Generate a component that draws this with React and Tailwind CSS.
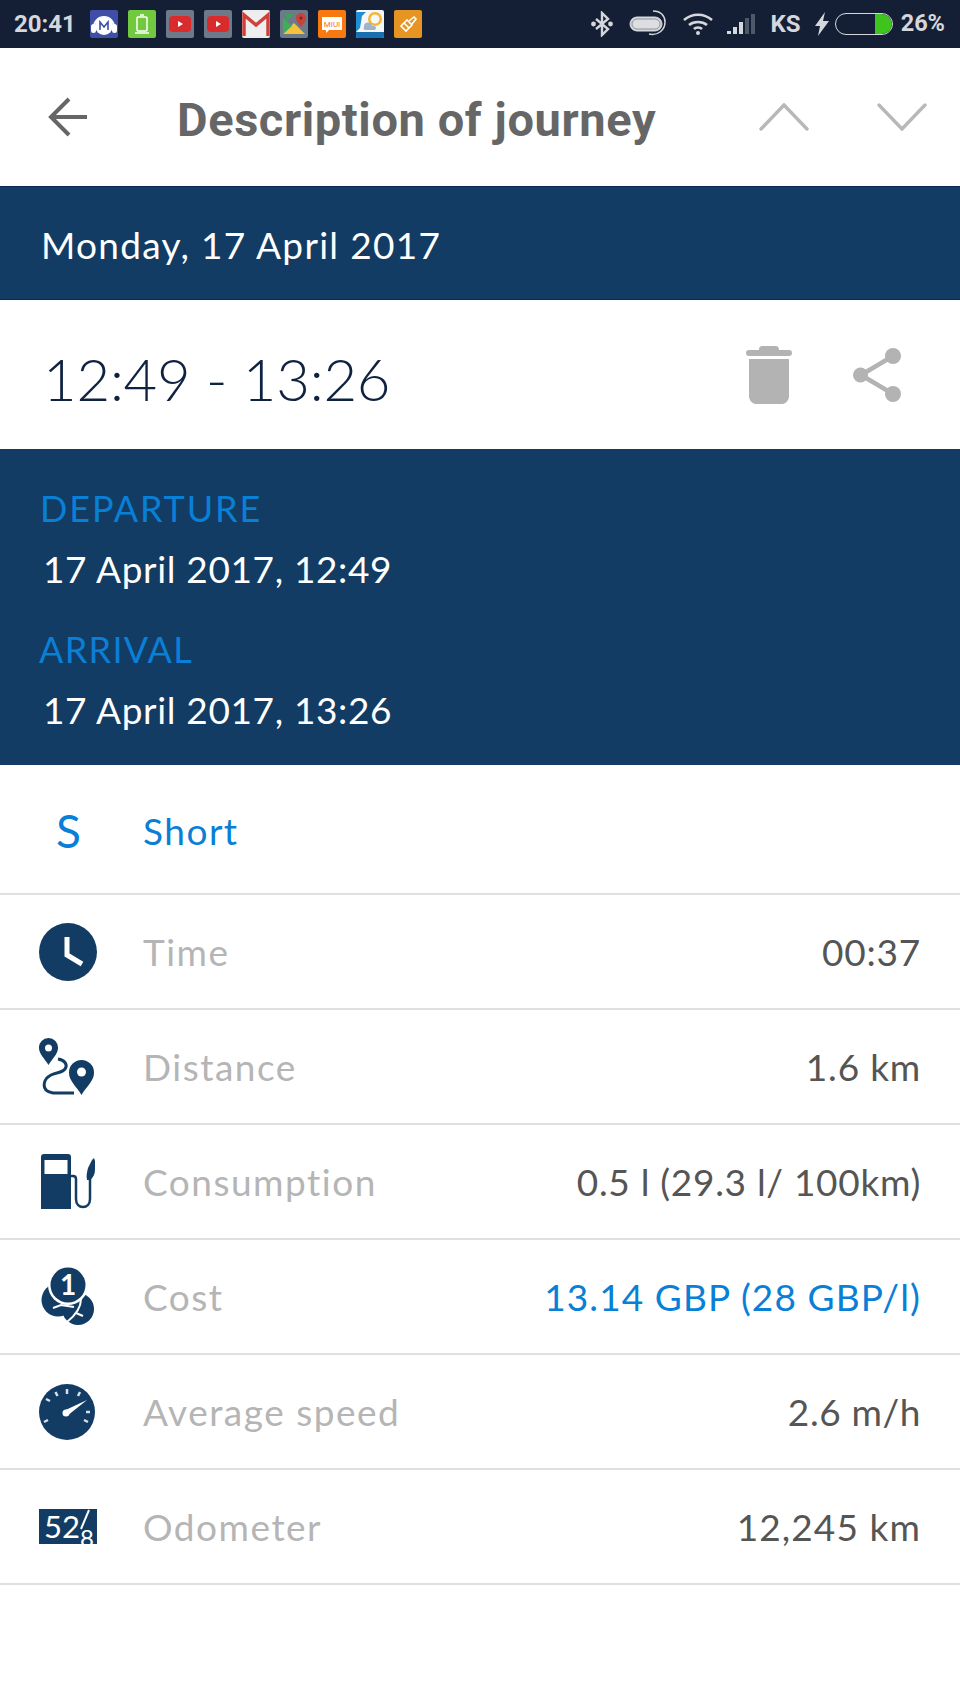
import React from "react";

const body = "font-['Lato','Open_Sans',sans-serif]";
const navy = "#123c63";

const AppTile = ({ bg, children }) => (
  <div className={`w-[28px] h-[28px] rounded-[2px] overflow-hidden shrink-0 flex items-center justify-center ${bg}`}>
    {children}
  </div>
);

const YouTubeGlyph = () => (
  <svg width="22" height="16" viewBox="0 0 22 16">
    <rect width="22" height="16" rx="4" fill="#d92b2b" />
    <path d="M9 5l5 3-5 3z" fill="#fff" />
  </svg>
);

const StatusBar = () => (
  <div className="h-[48px] bg-[#141f35] flex items-center pl-[14px] pr-[15px] font-['Roboto',sans-serif] font-bold text-[#d5d7dc] text-[24px] shrink-0">
    <span className="w-[76px]">20:41</span>
    <div className="flex gap-[10px]">
      <AppTile bg="bg-[#3f4fa8]">
        <svg width="28" height="28" viewBox="0 0 28 28">
          <path d="M4 17a10 10 0 0 1 20 0" fill="none" stroke="#fff" strokeWidth="2" />
          <rect x="1" y="14" width="5" height="9" rx="2.500" fill="#fff" />
          <rect x="22" y="14" width="5" height="9" rx="2.500" fill="#fff" />
          <circle cx="14" cy="16" r="9" fill="#fff" />
          <path d="M10 20v-8l4 5 4-5v8" fill="none" stroke="#3f4fa8" strokeWidth="1.600" />
        </svg>
      </AppTile>
      <AppTile bg="bg-[#72c83e]">
        <svg width="28" height="28" viewBox="0 0 28 28" fill="none" stroke="#fff" strokeWidth="1.500">
          <rect x="9" y="7" width="10" height="14" rx="1" />
          <path d="M12 5h4M7 23h14" />
        </svg>
      </AppTile>
      <AppTile bg="bg-[#6d7a8a]"><YouTubeGlyph /></AppTile>
      <AppTile bg="bg-[#6d7a8a]"><YouTubeGlyph /></AppTile>
      <AppTile bg="bg-[#ececec]">
        <svg width="28" height="28" viewBox="0 0 28 28">
          <rect x="1" y="3" width="26" height="23" fill="#eeeeee" />
          <path d="M2 26V5l12 10L26 5v21" fill="none" stroke="#d0403a" strokeWidth="3.500" />
        </svg>
      </AppTile>
      <AppTile bg="bg-[#6d7a8a]">
        <svg width="28" height="28" viewBox="0 0 28 28">
          <path d="M3 24L14 13l11 11z" fill="#f5c33b" />
          <path d="M3 24V8l9 8z" fill="#3fae5a" />
          <path d="M6 4h8l-8 8z" fill="#42a05a" />
          <path d="M21 3a5 5 0 0 1 5 5c0 3-3 6-5 9-2-3-5-6-5-9a5 5 0 0 1 5-5z" fill="#c8413a" />
          <circle cx="21" cy="8" r="1.600" fill="#7a2a24" />
        </svg>
      </AppTile>
      <AppTile bg="bg-[#f7790f]">
        <svg width="28" height="28" viewBox="0 0 28 28">
          <path d="M4 7h20v13H11l-3 3v-3H4z" fill="#fff" />
          <text x="14" y="17" textAnchor="middle" fontSize="8" fontFamily="Roboto" fontWeight="400" fill="#f7790f">MIUI</text>
        </svg>
      </AppTile>
      <AppTile bg="bg-[#f4f6f8]">
        <svg width="28" height="28" viewBox="0 0 28 28">
          <path d="M0 22V2h10l-4 4-2 12z" fill="#1f8fd0" />
          <path d="M0 22h28v6H0z" fill="#1a6fb0" />
          <circle cx="19" cy="9" r="7" fill="#f2b632" />
          <circle cx="19" cy="9" r="4.500" fill="#f7f7f7" />
          <path d="M8 17a4 4 0 0 1 8-1h2a2 2 0 0 1 0 4H9a2 2 0 0 1-1-3z" fill="#9fb4c8" />
        </svg>
      </AppTile>
      <AppTile bg="bg-[#e69522]">
        <svg width="28" height="28" viewBox="0 0 28 28" fill="none" stroke="#fff" strokeWidth="1.600">
          <path d="M7 16l6-6 5 5-6 6z" />
          <path d="M15 11l5-4 2 2-4 5" />
          <path d="M10 13l5 5" />
        </svg>
      </AppTile>
    </div>
    <div className="ml-auto flex items-center">
      <svg width="22" height="26" viewBox="0 0 22 26" fill="none" stroke="#d5d7dc" strokeWidth="2.400" className="mr-[16px]">
        <path d="M5 8l12 10-6 6V2l6 6L5 18" />
        <circle cx="2.500" cy="13" r="1.200" fill="#d5d7dc" />
        <circle cx="19.500" cy="13" r="1.200" fill="#d5d7dc" />
      </svg>
      <svg width="38" height="28" viewBox="0 0 38 28" fill="none" className="mr-[15px]">
        <rect x="1" y="7" width="32" height="14" rx="7" fill="#d5d7dc" stroke="#d5d7dc" />
        <rect x="3" y="9" width="28" height="10" rx="5" fill="#dcdee2" stroke="#8d929c" />
        <path d="M24 1c8 0 12 5 12 11 0 8-7 14-16 12" stroke="#d5d7dc" strokeWidth="1.500" />
      </svg>
      <svg width="32" height="24" viewBox="0 0 32 24" fill="none" stroke="#d5d7dc" strokeWidth="2.600" className="mr-[12px]">
        <path d="M2 8c8-7 20-7 28 0" />
        <path d="M7 13c5-4 13-4 18 0" />
        <path d="M12 17c2-2 6-2 8 0" />
        <circle cx="16" cy="21" r="2" fill="#d5d7dc" stroke="none" />
      </svg>
      <svg width="32" height="24" viewBox="0 0 32 24" className="mr-[13px]">
        <rect x="1" y="19" width="4" height="3" fill="#d5d7dc" />
        <rect x="7" y="15" width="4" height="7" fill="#d5d7dc" />
        <rect x="13" y="10" width="4" height="12" fill="#d5d7dc" />
        <rect x="19" y="6" width="4" height="16" fill="#4e586b" />
        <rect x="25" y="2" width="4" height="20" fill="#4e586b" />
      </svg>
      <span className="mr-[14px]">KS</span>
      <svg width="14" height="24" viewBox="0 0 14 24" fill="#d5d7dc" className="mr-[6px]">
        <path d="M10 0L0 14h5L3 24 14 9H8z" />
      </svg>
      <div className="w-[58px] h-[22px] rounded-full border-[1.5px] border-[#d5d7dc] flex justify-end overflow-hidden mr-[8px]">
        <div className="w-[17px] h-full bg-[#3fc41d] rounded-r-full"></div>
      </div>
      <span className="text-[23.5px]">26%</span>
    </div>
  </div>
);

const BackIcon = () => (
  <svg width="40" height="40" viewBox="0 0 40 40" fill="none" stroke="#666666" strokeWidth="4">
    <path d="M39 20H3M21 2L3 20l18 18" />
  </svg>
);

const PagerIcon = ({ down }) => (
  <svg width="50" height="28" viewBox="0 0 50 28" fill="none" stroke="#b8b8b8" strokeWidth="3.400" strokeLinecap="round">
    <path d={down ? "M2 2l23 24L48 2" : "M2 26L25 2l23 24"} />
  </svg>
);

const TrashIcon = () => (
  <svg width="46" height="59" viewBox="0 0 46 59" fill="#b3b3b3">
    <path d="M13 5c0-3 1-4 4-4h12c3 0 4 1 4 4h10c2 0 3 1 3 3s-1 3-3 3H3c-2 0-3-1-3-3s1-3 3-3z" />
    <path d="M3 14h40v37c0 4-3 8-7 8H10c-4 0-7-4-7-8z" />
  </svg>
);

const ShareIcon = () => (
  <svg width="48" height="54" viewBox="0 0 48 54" fill="#b3b3b3">
    <circle cx="7.500" cy="27" r="7.500" />
    <circle cx="40" cy="8" r="8" />
    <circle cx="40" cy="46" r="8" />
    <path d="M8 27L40 8M8 27l32 19" stroke="#b3b3b3" strokeWidth="4.500" />
  </svg>
);

const ClockIcon = () => (
  <svg width="58" height="58" viewBox="0 0 58 58">
    <circle cx="29" cy="29" r="29" fill={navy} />
    <path d="M28 14v18l15 9" fill="none" stroke="#fff" strokeWidth="5" />
  </svg>
);

const RouteIcon = () => (
  <svg width="56" height="58" viewBox="0 0 56 58">
    <path d="M9.500 0a9.500 9.500 0 0 1 9.500 10c0 6-6 11-9.500 17C6 21 0 16 0 10A9.500 9.500 0 0 1 9.500 0z" fill={navy} />
    <circle cx="9.500" cy="10" r="3.500" fill="#fff" />
    <path d="M42.500 22a12.500 12.500 0 0 1 12.500 13c0 8-8 14-12.500 22-4.500-8-12.500-14-12.500-22A12.500 12.500 0 0 1 42.500 22z" fill={navy} />
    <circle cx="42.500" cy="34" r="4.500" fill="#fff" />
    <path d="M19 21c7 1 10 6 7 10-3 4-8 3-14 6-8 4-11 16 2 18h21" fill="none" stroke={navy} strokeWidth="3" />
  </svg>
);

const FuelIcon = () => (
  <svg width="56" height="56" viewBox="0 0 56 56" className="ml-[2px]">
    <path d="M0 3a3 3 0 0 1 3-3h24a3 3 0 0 1 3 3v52H0z" fill={navy} />
    <rect x="3.500" y="6" width="23" height="14" fill="#fff" />
    <path d="M30 22h2c2 0 3 1 3 3v20c0 5 3 8 7 8s7-3 7-8V25" fill="none" stroke={navy} strokeWidth="2.500" />
    <path d="M47 14l4-8 2-2 1 3v9c0 4-2 8-5 10h-3c-1-4 0-8 1-12z" fill={navy} />
  </svg>
);

const CoinsIcon = () => (
  <svg width="53" height="59" viewBox="0 0 53 59" className="ml-[2px]">
    <circle cx="17" cy="33" r="16.500" fill={navy} />
    <circle cx="37" cy="42" r="16" fill={navy} />
    <path d="M12 41l8-3 13 2M40 32c0 7-4 15-14 23M35 46l7 3" fill="none" stroke="#fff" strokeWidth="2" />
    <circle cx="27" cy="18" r="20" fill="#fff" />
    <circle cx="27" cy="18" r="17.500" fill={navy} />
    <text x="27" y="28" textAnchor="middle" fontSize="28" fontFamily="Lato" fontWeight="700" fill="#fff">1</text>
  </svg>
);

const SpeedIcon = () => (
  <svg width="56" height="56" viewBox="0 0 56 56">
    <circle cx="28" cy="28" r="28" fill={navy} />
    <g stroke="#d7e0e8" strokeWidth="2.500">
      <path d="M28 5v5M16.500 8l2 4M7 15l4 2M5 38l4-2M47 28h4M45 36l4 2M39 12l2-4" />
    </g>
    <circle cx="27" cy="29" r="3.500" fill="#fff" />
    <path d="M25.500 26.500L48 16 28 32z" fill="#fff" />
  </svg>
);

const OdoIcon = () => (
  <div className="w-[58px] h-[35px] bg-[#123c63] relative font-['Lato',sans-serif] text-white leading-none">
    <span className="absolute left-[5px] top-[3px] text-[31px] leading-[29px]">52</span>
    <span className="absolute left-[41px] top-[17px] text-[24px] leading-[24px]">8</span>
    <svg width="58" height="35" viewBox="0 0 58 35" className="absolute left-0 top-0">
      <path d="M50 1L42 20" stroke="#fff" strokeWidth="2" />
    </svg>
  </div>
);

const rows = [
  { icon: <ClockIcon />, label: "Time", value: "00:37", track: "tracking-[0.8px]" },
  { icon: <RouteIcon />, label: "Distance", value: "1.6 km", track: "tracking-[0.8px]" },
  { icon: <FuelIcon />, label: "Consumption", value: "0.5 l (29.3 l/ 100km)", track: "tracking-[0.7px]" },
  { icon: <CoinsIcon />, label: "Cost", value: "13.14 GBP (28 GBP/l)", track: "tracking-[1.1px]", blue: true },
  { icon: <SpeedIcon />, label: "Average speed", value: "2.6 m/h", track: "tracking-[0.6px]" },
  { icon: <OdoIcon />, label: "Odometer", value: "12,245 km", track: "tracking-[1.1px]" },
];

export default function App() {
  return (
    <div className={`w-[960px] h-[1707px] bg-white flex flex-col overflow-hidden ${body}`}>
      <StatusBar />

      <header className="h-[138px] flex items-center shrink-0">
        <div className="ml-[48px]">
          <BackIcon />
        </div>
        <h1 className="ml-[89px] pt-[4px] font-['Roboto',sans-serif] font-bold text-[47px] tracking-[0.6px] text-[#666666] leading-none">
          Description of journey
        </h1>
        <div className="ml-auto flex items-center gap-[68px] pr-[33px]">
          <PagerIcon />
          <PagerIcon down />
        </div>
      </header>

      <div className="h-[114px] bg-[#123c63] flex items-center pt-[3px] pl-[41px] text-white text-[37px] tracking-[1.3px] shrink-0 border-y border-[#0a2a55]">
        Monday, 17 April 2017
      </div>

      <div className="h-[149px] flex items-center pl-[43px] shrink-0">
        <span className="pt-[8px] text-[58px] font-light tracking-[-0.2px] text-[#0f2240]">12:49 - 13:26</span>
        <div className="ml-auto flex items-center gap-[61px] pr-[59px]">
          <TrashIcon />
          <ShareIcon />
        </div>
      </div>

      <div className="h-[316px] bg-[#123c63] flex flex-col pl-[40px] pt-[37px] shrink-0">
        <div className="text-[#0a7fd6] text-[36px] tracking-[1.9px] leading-[44px]">DEPARTURE</div>
        <div className="text-white text-[37px] tracking-[0.65px] leading-[44px] mt-[17px] ml-[3px]">17 April 2017, 12:49</div>
        <div className="text-[#0a7fd6] text-[36px] tracking-[1.3px] leading-[44px] mt-[36px] -ml-[1px]">ARRIVAL</div>
        <div className="text-white text-[37px] tracking-[0.65px] leading-[44px] mt-[17px] ml-[3px]">17 April 2017, 13:26</div>
      </div>

      <div className="h-[130px] pt-[3px] flex items-center shrink-0 border-b-2 border-[#e0e0e0] text-[#0a7fd6]">
        <span className="w-[143px] pl-[56px] text-[46px] leading-none">S</span>
        <span className="text-[37px] tracking-[1.5px]">Short</span>
      </div>

      {rows.map((row) => (
        <div key={row.label} className="h-[115px] flex items-center shrink-0 border-b-2 border-[#e0e0e0] pr-[39px]">
          <div className="w-[143px] pl-[39px] flex items-center">{row.icon}</div>
          <span className="pt-[1px] text-[37px] tracking-[1.5px] text-[#b5b5b5]">{row.label}</span>
          <span className={`ml-auto pt-[1px] text-[37px] ${row.track} ${row.blue ? "text-[#0a7fd6]" : "text-[#555555]"}`}>{row.value}</span>
        </div>
      ))}
    </div>
  );
}
